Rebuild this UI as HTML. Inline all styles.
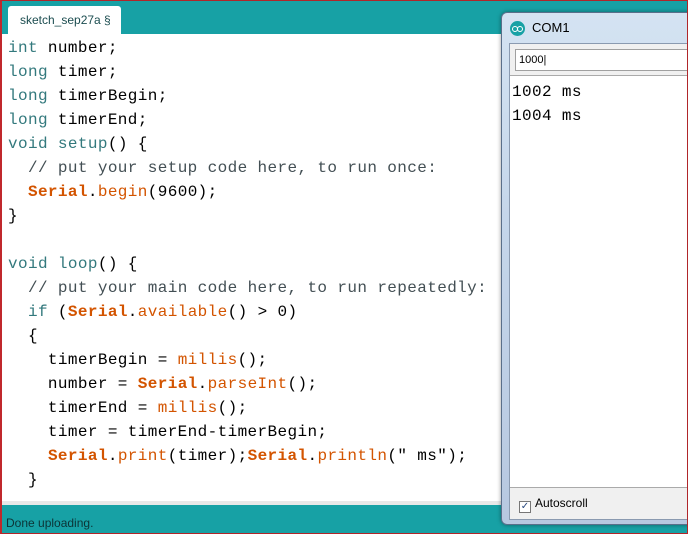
<!DOCTYPE html>
<html><head><style>
*{margin:0;padding:0;box-sizing:border-box}
body{width:688px;height:534px;overflow:hidden;position:relative;background:#fff;font-family:"Liberation Sans",sans-serif}
.frame{position:absolute;inset:0;border:1px solid #b0262a;border-left:2px solid #c0282c;z-index:10;pointer-events:none}
.top{position:absolute;left:0;top:0;width:688px;height:34px;background:#17a1a5}
.tab{position:absolute;left:8px;top:6px;width:113px;height:28px;background:#fff;border-radius:3px 3px 0 0;font-size:12px;color:#1c4d50;padding:7px 0 0 12px}
.code{position:absolute;left:8px;top:36px;font-family:"Liberation Mono",monospace;font-size:16px;letter-spacing:0.38px;line-height:24px;color:#000;white-space:pre}
.k{color:#33797d}.s{color:#d35400;font-weight:bold}.f{color:#d35400}.c{color:#434f54}
.gray{position:absolute;left:0;top:501px;width:688px;height:4px;background:#e8e8e8}
.status{position:absolute;left:0;top:505px;width:688px;height:29px;background:#17a1a5;font-size:12px;color:#0c3436;padding:11px 0 0 6px}
.win{position:absolute;left:501px;top:12px;width:190px;height:513px;background:linear-gradient(#d4e3f2,#c5d6ea 40%,#b7c8e0);border:1px solid #5a6f8a;border-radius:6px 0 0 6px;box-shadow:0 0 4px rgba(0,0,0,.4)}
.title{position:absolute;left:30px;top:7px;font-size:13px;color:#000}
.logo{position:absolute;left:8px;top:8px;width:15px;height:15px;border-radius:50%;background:#17a1a5}
.logo:before,.logo:after{content:"";position:absolute;top:5px;width:4px;height:4px;border:1px solid #fff;border-radius:50%}
.logo:before{left:2px}.logo:after{left:7px}
.inner{position:absolute;left:7px;top:30px;width:190px;height:477px;background:#f0f0f0;border:1px solid #8a9ab0}
.input{position:absolute;left:5px;top:5px;width:180px;height:22px;background:#fff;border:1px solid #a0a0a0;font-size:11px;padding:4px 0 0 3px}
.out{position:absolute;left:0;top:31px;width:190px;height:413px;background:#fff;border-top:1px solid #aaa;border-bottom:1px solid #aaa;font-family:"Liberation Mono",monospace;font-size:16px;letter-spacing:0.38px;line-height:24px;padding:4px 0 0 2px;white-space:pre}
.auto{position:absolute;left:9px;top:452px;font-size:12px}
.cb{display:inline-block;width:12px;height:12px;border:1px solid #777;background:#fff;vertical-align:-2px;margin-right:4px;font-size:10px;line-height:10px;text-align:center;color:#2a4a80}
</style></head><body>
<div class="top"><div class="tab">sketch_sep27a §</div></div>
<div class="code"><span class="k">int</span> number;
<span class="k">long</span> timer;
<span class="k">long</span> timerBegin;
<span class="k">long</span> timerEnd;
<span class="k">void</span> <span class="k">setup</span>() {
  <span class="c">// put your setup code here, to run once:</span>
  <span class="s">Serial</span>.<span class="f">begin</span>(9600);
}

<span class="k">void</span> <span class="k">loop</span>() {
  <span class="c">// put your main code here, to run repeatedly:</span>
  <span class="k">if</span> (<span class="s">Serial</span>.<span class="f">available</span>() &gt; 0)
  {
    timerBegin = <span class="f">millis</span>();
    number = <span class="s">Serial</span>.<span class="f">parseInt</span>();
    timerEnd = <span class="f">millis</span>();
    timer = timerEnd-timerBegin;
    <span class="s">Serial</span>.<span class="f">print</span>(timer);<span class="s">Serial</span>.<span class="f">println</span>(" ms");
  }</div>
<div class="gray"></div>
<div class="status">Done uploading.</div>
<div class="win"><div class="logo"></div><div class="title">COM1</div>
<div class="inner"><div class="input">1000|</div>
<div class="out">1002 ms
1004 ms</div>
<div class="auto"><span class="cb">✓</span>Autoscroll</div></div></div>
<div class="frame"></div>
</body></html>
